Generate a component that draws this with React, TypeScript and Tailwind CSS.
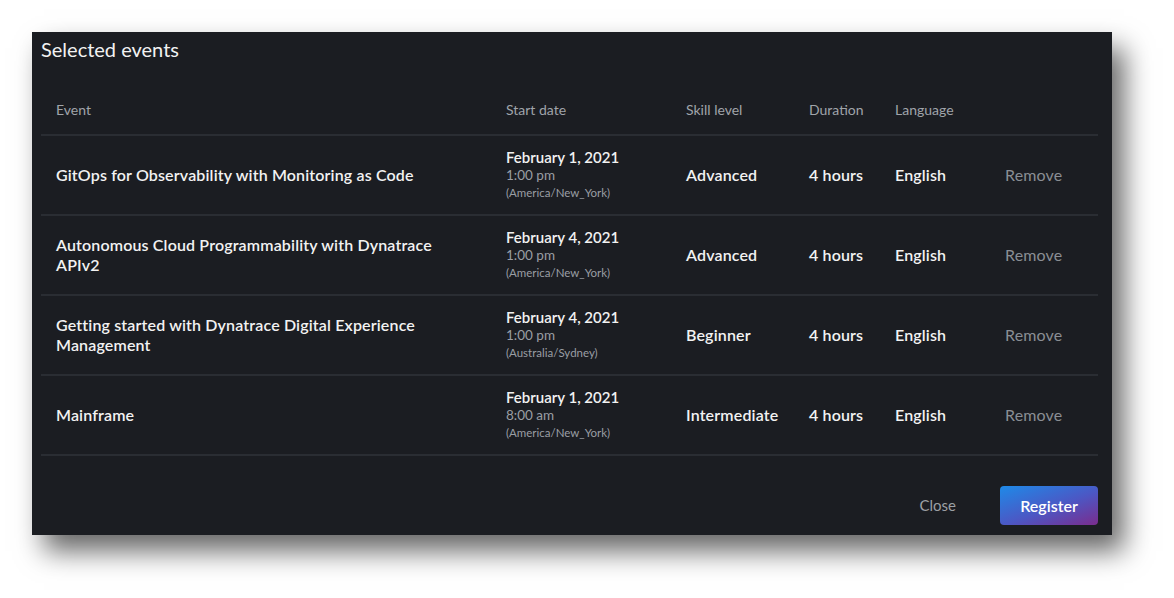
import React from 'react';

interface EventRow {
  title: string[];
  date: string;
  time: string;
  zone: string;
  level: string;
  duration: string;
  language: string;
}

const events: EventRow[] = [
  { title: ['GitOps for Observability with Monitoring as Code'], date: 'February 1, 2021', time: '1:00 pm', zone: '(America/New_York)', level: 'Advanced', duration: '4 hours', language: 'English' },
  { title: ['Autonomous Cloud Programmability with Dynatrace', 'APIv2'], date: 'February 4, 2021', time: '1:00 pm', zone: '(America/New_York)', level: 'Advanced', duration: '4 hours', language: 'English' },
  { title: ['Getting started with Dynatrace Digital Experience', 'Management'], date: 'February 4, 2021', time: '1:00 pm', zone: '(Australia/Sydney)', level: 'Beginner', duration: '4 hours', language: 'English' },
  { title: ['Mainframe'], date: 'February 1, 2021', time: '8:00 am', zone: '(America/New_York)', level: 'Intermediate', duration: '4 hours', language: 'English' },
];

const cols = 'grid grid-cols-[450px_180px_123px_86px_110px_1fr]';

export default function App() {
  return (
    <div className="min-h-[598px] bg-white pl-[32px] pt-[32px]" style={{ fontFamily: 'Lato, "Open Sans", sans-serif' }}>
      <div className="w-[1080px] h-[503px] bg-[#1b1d22] shadow-[12px_16px_26px_rgba(0,0,0,0.6)] flex flex-col pl-[9px]">
        <h2 className="text-[20px] text-[#f2f2f2] leading-[24px] pt-[5px]">Selected events</h2>

        {/* Table */}
        <div className="mt-[24px] w-[1057px]">
          <div className={`${cols} h-[51px] items-center text-[14px] text-[#a0a4aa] border-b-2 border-[#2a2d33]`}>
            <div className="pl-[15px]">Event</div>
            <div className="pl-[15px]">Start date</div>
            <div className="pl-[15px]">Skill level</div>
            <div className="pl-[15px]">Duration</div>
            <div className="pl-[15px]">Language</div>
            <div />
          </div>
          {events.map((e, i) => (
            <div key={i} className={`${cols} h-[80px] items-center text-[16px] tracking-[0.15px] text-[#f2f2f2] font-semibold border-b-2 border-[#2a2d33]`}>
              <div className="pl-[15px] leading-[20px]">
                {e.title.map((t, j) => (
                  <div key={j}>{t}</div>
                ))}
              </div>
              <div className="pl-[15px] tracking-normal">
                <div className="leading-[18px] text-[15px] font-semibold">{e.date}</div>
                <div className="leading-[18px] text-[13.5px] font-normal text-[#9a9ea4]">{e.time}</div>
                <div className="leading-[18px] text-[11.5px] font-normal text-[#9a9ea4]">{e.zone}</div>
              </div>
              <div className="pl-[15px]">{e.level}</div>
              <div className="pl-[15px]">{e.duration}</div>
              <div className="pl-[15px]">{e.language}</div>
              <div className="pl-[15px] font-normal text-[#8a8e94]">Remove</div>
            </div>
          ))}
        </div>

        {/* Footer */}
        <div className="flex justify-end items-center gap-[44px] mt-[30px] w-[1057px]">
          <button className="text-[15px] text-[#9da0a5]">Close</button>
          <button className="w-[98px] h-[39px] rounded-[4px] text-[16px] font-semibold text-white bg-[linear-gradient(160deg,#1e8ae8_0%,#4c57c4_55%,#7b2c8d_100%)]">
            Register
          </button>
        </div>
      </div>
    </div>
  );
}
